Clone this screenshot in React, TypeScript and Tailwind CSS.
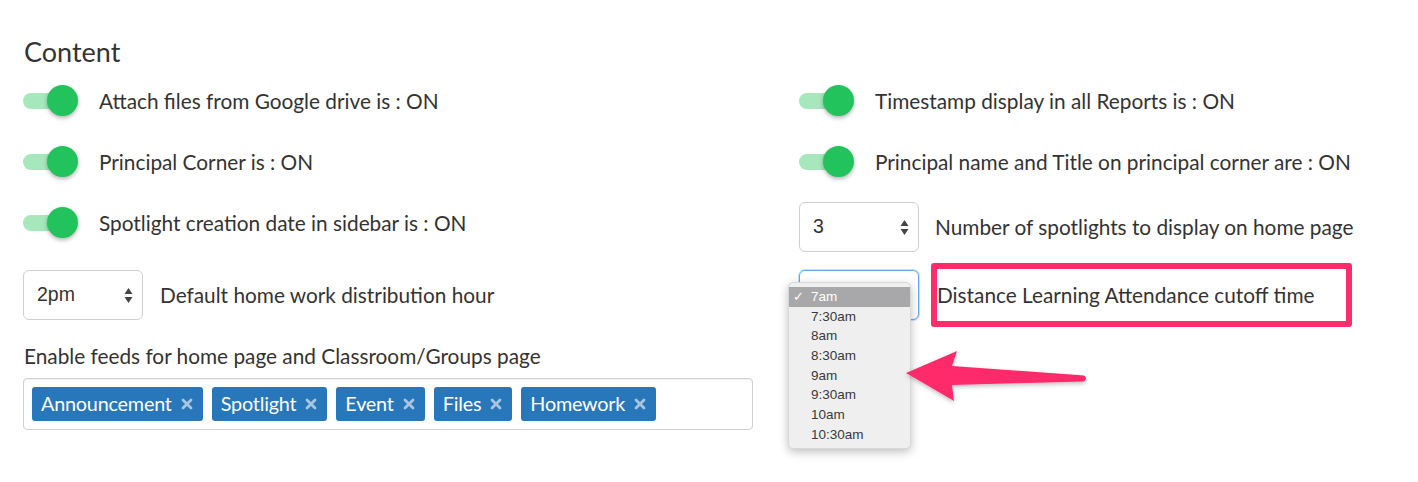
import React from "react";

function Toggle() {
  return (
    <div className="relative w-[56px] h-[32px] shrink-0">
      <div className="absolute left-0 top-[8px] w-[50px] h-[16px] rounded-full bg-[#a6e8bb]" />
      <div className="absolute left-[24px] top-0 w-[31px] h-[31px] rounded-full bg-[#22c35c] shadow-[0_2px_4px_rgba(0,0,0,0.3)]" />
    </div>
  );
}

function UpDown() {
  return (
    <svg width="9" height="17" viewBox="0 0 9 17" className="shrink-0">
      <path d="M4.5 1 L8.5 7 L0.5 7 Z" fill="#444" />
      <path d="M4.5 16 L8.5 10 L0.5 10 Z" fill="#444" />
    </svg>
  );
}

function Select({ value, focused }: { value: string; focused?: boolean }) {
  return (
    <div
      className={
        focused
          ? "w-[120px] h-[50px] rounded-[6px] border border-[#5fa9ee] shadow-[0_0_0_1px_rgba(95,169,238,0.35)] bg-white flex items-center justify-between pl-[13px] pr-[9px] shrink-0"
          : "w-[120px] h-[50px] rounded-[6px] border border-[#cfcfcf] bg-white flex items-center justify-between pl-[13px] pr-[9px] shrink-0"
      }
    >
      <span className="text-[19.5px] text-[#333] font-['Liberation_Sans',sans-serif]">{value}</span>
      <UpDown />
    </div>
  );
}

function ToggleRow({ label }: { label: string }) {
  return (
    <div className="flex items-center h-[32px] gap-[20px]">
      <Toggle />
      <span className="text-[20.8px] text-[#333] whitespace-nowrap">{label}</span>
    </div>
  );
}

function Tag({ label }: { label: string }) {
  return (
    <div className="h-[34px] rounded-[3px] bg-[#2777ba] flex items-center pl-[9px] pr-[10px] gap-[9px]">
      <span className="text-white text-[19.8px] leading-none tracking-[-0.2px]">{label}</span>
      <svg width="12" height="12" viewBox="0 0 12 12">
        <path d="M2 2 L10 10 M10 2 L2 10" stroke="#a8c5e2" strokeWidth="2.8" strokeLinecap="round" />
      </svg>
    </div>
  );
}

const options = ["7am", "7:30am", "8am", "8:30am", "9am", "9:30am", "10am", "10:30am"];

export default function App() {
  return (
    <div className="relative w-[1418px] h-[482px] bg-white font-['Lato',sans-serif] text-[#333] overflow-hidden">
      <div className="pl-[23px] pt-[36px]">
        <h2 className="text-[27px] leading-[32px] ml-[1px] text-[#333]">Content</h2>
        <div className="flex mt-[17px]">
          <div className="w-[776px] flex flex-col">
            <ToggleRow label="Attach files from Google drive is : ON" />
            <div className="mt-[29px]">
              <ToggleRow label="Principal Corner is : ON" />
            </div>
            <div className="mt-[29px]">
              <ToggleRow label="Spotlight creation date in sidebar is : ON" />
            </div>
            <div className="mt-[31px] flex items-center gap-[17px]">
              <Select value="2pm" />
              <span className="text-[20.8px] whitespace-nowrap">Default home work distribution hour</span>
            </div>
            <div className="mt-[24px] ml-[1px] text-[20.8px] leading-[24px] whitespace-nowrap">
              Enable feeds for home page and Classroom/Groups page
            </div>
            <div className="mt-[10px] w-[730px] h-[52px] rounded-[4px] border border-[#d0d0d0] flex items-center pl-[8px] gap-[9px] shadow-[inset_0_1px_1px_rgba(0,0,0,0.06)]">
              <Tag label="Announcement" />
              <Tag label="Spotlight" />
              <Tag label="Event" />
              <Tag label="Files" />
              <Tag label="Homework" />
            </div>
          </div>
          <div className="flex flex-col">
            <ToggleRow label="Timestamp display in all Reports is : ON" />
            <div className="mt-[29px]">
              <ToggleRow label="Principal name and Title on principal corner are : ON" />
            </div>
            <div className="mt-[24px] flex items-center gap-[16px]">
              <Select value="3" />
              <span className="text-[20.8px] whitespace-nowrap">Number of spotlights to display on home page</span>
            </div>
            <div className="mt-[18px] flex items-center gap-[12px]">
              <Select value="" focused />
              <div className="my-[-7px] w-[421px] h-[64px] border-[6px] border-[#fe2c6b] rounded-[3px] flex items-center">
                <span className="text-[20.8px] whitespace-nowrap">Distance Learning Attendance cutoff time</span>
              </div>
            </div>
          </div>
        </div>
      </div>

      {/* native select dropdown overlay */}
      <div className="absolute left-[788px] top-[282px] w-[123px] h-[167px] rounded-[5px] bg-[#efefef] border border-[#d8d8d8] shadow-[0_3px_10px_rgba(0,0,0,0.25)] pt-[4px] font-['Liberation_Sans',sans-serif] text-[13.5px]">
        {options.map((o, i) => (
          <div
            key={o}
            className={
              i === 0
                ? "h-[19.7px] leading-[19.7px] bg-[#a8a8ab] text-white flex items-center"
                : "h-[19.7px] leading-[19.7px] text-[#3a3a3a] flex items-center"
            }
          >
            <span className="w-[22px] pl-[4px] text-[13px]">{i === 0 ? "✓" : ""}</span>
            <span>{o}</span>
          </div>
        ))}
      </div>

      {/* annotation arrow */}
      <svg className="absolute left-0 top-0" width="1418" height="482" viewBox="0 0 1418 482">
        <defs>
          <filter id="sh" x="-10%" y="-30%" width="120%" height="160%">
            <feDropShadow dx="0" dy="2" stdDeviation="2" floodColor="#000" floodOpacity="0.25" />
          </filter>
        </defs>
        <path
          d="M906 373 L957 351 L952 366 L1084 375.5 Q1088 378.5 1084 381.5 L952 385 L954 401 Z"
          fill="#fe2c6b"
          filter="url(#sh)"
        />
      </svg>
    </div>
  );
}
